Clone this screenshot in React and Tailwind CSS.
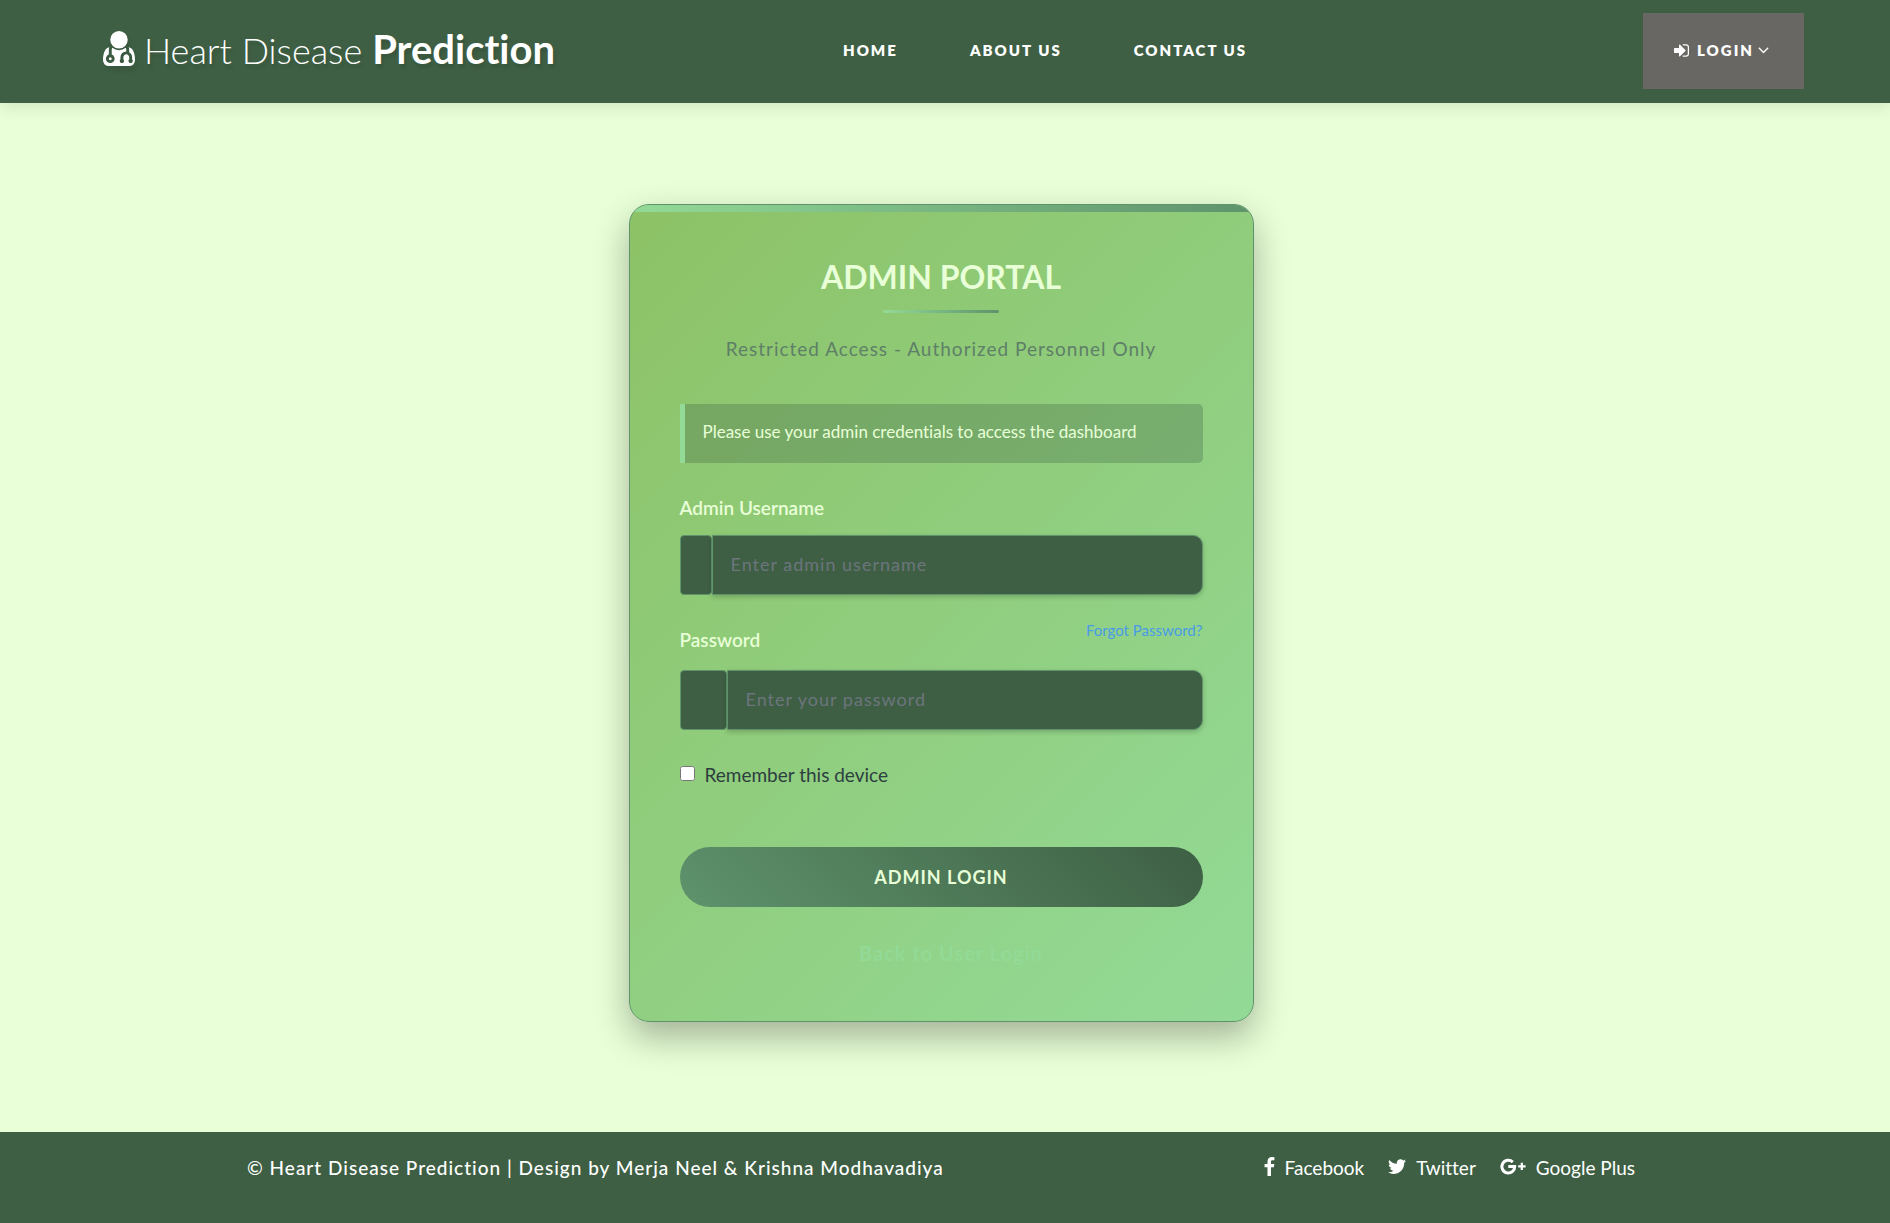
import React from "react";

const icons = {
  doctor:
    "M576 1344q0 26-19 45t-45 19-45-19-19-45 19-45 45-19 45 19 19 45zm1024 61q0 121-73 190t-194 69h-874q-121 0-194-69t-73-190q0-68 5.5-131t24-138 47.5-132.500 81-103 120-60.500q-22 52-22 120v203q-58 20-93 70t-35 111q0 80 56 136t136 56 136-56 56-136q0-61-35.500-111t-92.500-70v-203q0-62 25-93 132 104 295 104t295-104q25 31 25 93v64q-106 0-181 75t-75 181v89q-32 29-32 71 0 40 28 68t68 28 68-28 28-68q0-42-32-71v-89q0-52 38-90t90-38 90 38 38 90v89q-32 29-32 71 0 40 28 68t68 28 68-28 28-68q0-42-32-71v-89q0-68-34.500-127.500t-93.500-93.500q0-10 .5-42.500t0-48-2.500-41.500-7-47-13-40q68 15 120 60.500t81 103 47.500 132.500 24 138 5.500 131zm-320-893q0 159-112.500 271.500t-271.500 112.500-271.500-112.500-112.500-271.500 112.500-271.500 271.500-112.500 271.500 112.500 112.500 271.500z",
  signIn:
    "M1312 896q0 26-19 45l-544 544q-19 19-45 19t-45-19-19-45v-288h-448q-26 0-45-19t-19-45v-384q0-26 19-45t45-19h448v-288q0-26 19-45t45-19 45 19l544 544q19 19 19 45zm352-352v704q0 119-84.500 203.500t-203.500 84.500h-320q-13 0-22.500-9.500t-9.500-22.500q0-4-1-20t-.5-26.500 3-23.500 10-19.500 20.500-6.500h320q66 0 113-47t47-113v-704q0-66-47-113t-113-47h-312l-11.500-1-11.500-3-8-5.500-7-9-2-13.500q0-4-1-20t-.5-26.500 3-23.500 10-19.500 20.500-6.500h320q119 0 203.500 84.500t84.500 203.500z",
  angleDown:
    "M1395 736q0 13-10 23l-466 466q-10 10-23 10t-23-10l-466-466q-10-10-10-23t10-23l50-50q10-10 23-10t23 10l393 393 393-393q10-10 23-10t23 10l50 50q10 10 10 23z",
  facebook:
    "M1343 12v264h-157q-86 0-116 36t-30 108v189h293l-39 296h-254v759h-306v-759h-255v-296h255v-218q0-186 104-288.500t277-102.500q147 0 228 12z",
  twitter:
    "M1684 408q-67 98-162 167 1 14 1 42 0 130-38 259.500t-115.500 248.500-184.500 210.500-258 146-323 54.500q-271 0-496-145 35 4 78 4 225 0 401-138-105-2-188-64.500t-114-159.500q33 5 61 5 43 0 85-11-112-23-185.500-111.500t-73.500-205.500v-4q68 38 146 41-66-44-105-115t-39-154q0-88 44-163 121 149 294.500 238.500t371.500 99.500q-8-38-8-74 0-134 94.500-228.500t228.500-94.500q140 0 236 102 109-21 205-78-37 115-142 178 93-10 186-50z",
};

function Icon({ name, viewBox = "0 0 1792 1792", className }) {
  return (
    <svg viewBox={viewBox} fill="currentColor" aria-hidden="true" className={className}>
      <path d={icons[name]} />
    </svg>
  );
}

function GooglePlusIcon({ className }) {
  return (
    <svg viewBox="0 0 26 17" fill="none" stroke="currentColor" aria-hidden="true" className={className}>
      <path d="M12.800 4.100A6.400 6.400 0 1 0 14.700 8.500H8.300" strokeWidth="3" />
      <path d="M21.800 4.700v7.200M18.200 8.300h7.400" strokeWidth="2.200" />
    </svg>
  );
}

function Header() {
  return (
    <header className="flex h-[103px] items-center bg-[#3e5f44] pr-[86px] pb-[2px] pl-[103px] text-white shadow-[0_4px_15px_rgba(0,0,0,0.1)]">
      <div className="flex w-[740px] items-center">
        <a href="#home" className="flex items-center gap-[9px] text-[40px] leading-[48px] text-shadow-[2px_4px_3px_rgba(0,0,0,0.1)]">
          <Icon name="doctor" viewBox="192 128 1408 1536" className="mb-1 h-[35px] w-8 drop-shadow-[2px_4px_2px_rgba(0,0,0,0.1)]" />
          <span className="mb-[2px] flex items-baseline gap-[10px]">
            <span className="text-[36px] font-light">Heart Disease</span>
            <span className="font-bold">Prediction</span>
          </span>
        </a>
      </div>
      <nav className="flex gap-[72px] text-[15px] font-extrabold tracking-[2px]">
        <a href="#home">HOME</a>
        <a href="#about">ABOUT US</a>
        <a href="#contact">CONTACT US</a>
      </nav>
      <button type="button" className="ml-auto flex h-[76px] w-[161px] items-center justify-center bg-[#696763] pr-1 text-[15px] font-extrabold tracking-[2px]">
        <Icon name="signIn" viewBox="128 128 1536 1536" className="mr-2 size-[15px]" />
        LOGIN
        <Icon name="angleDown" viewBox="384 512 1024 896" className="ml-1 h-[9px] w-[11px]" />
      </button>
    </header>
  );
}

function Field({ id, type, placeholder, addonClass }) {
  return (
    <div className="flex h-[60px]">
      <span className={`rounded-[4px] border border-[#5e936c] bg-[#3e5f44] ${addonClass}`} />
      <input
        id={id}
        type={type}
        placeholder={placeholder}
        className="min-w-0 flex-1 rounded-r-[10px] border border-[#5e936c] bg-[#3e5f44] px-[18px] pb-[2px] text-[18px] tracking-[1px] text-[#e8ffd7] shadow-[0_2px_5px_rgba(0,0,0,0.2)] outline-none placeholder:text-[#6c757d]"
      />
    </div>
  );
}

function AdminCard() {
  return (
    <form
      onSubmit={(e) => e.preventDefault()}
      className="w-[625px] overflow-hidden rounded-[20px] border border-[#5e936c] bg-linear-[135deg,#8dc266,#93da97] shadow-[0_15px_35px_rgba(0,0,0,0.3)]"
    >
      <div className="h-[7px] bg-linear-to-r from-[#93da97] to-[#5e936c]" />
      <div className="flex flex-col px-[50px] pt-[45px] pb-14">
        <h1 className="text-center text-[32px] leading-10 font-bold text-[#e8ffd7]">ADMIN PORTAL</h1>
        <div className="mx-auto mt-[13px] h-[3px] w-[116px] rounded-sm bg-linear-to-r from-[#93da97] to-[#5e936c]" />
        <p className="mt-6 text-center text-[19px] leading-6 tracking-[1px] text-[#5e7f68]">
          Restricted Access - Authorized Personnel Only
        </p>
        <p className="mt-[43px] flex h-[59px] items-center rounded-r-[5px] border-l-[5px] border-[#93da97] bg-[#3e5f44]/30 px-[18px] pb-1 text-[17px] text-[#e8ffd7]">
          Please use your admin credentials to access the dashboard
        </p>
        <label htmlFor="username" className="mt-[33px] text-[19px] leading-6 font-semibold text-[#e8ffd7]">
          Admin Username
        </label>
        <div className="mt-[15px]">
          <Field id="username" type="text" placeholder="Enter admin username" addonClass="w-8" />
        </div>
        <div className="mt-[23px] flex items-start justify-between">
          <label htmlFor="password" className="mt-[10px] text-[19px] leading-6 font-semibold text-[#e8ffd7]">
            Password
          </label>
          <a href="#forgot" className="text-[15px] leading-6 text-[#4a9be8]">
            Forgot Password?
          </a>
        </div>
        <div className="mt-[18px]">
          <Field id="password" type="password" placeholder="Enter your password" addonClass="w-[47px]" />
        </div>
        <label className="mt-[33px] flex items-center gap-[10px] text-[19px] leading-6 text-[#2d3e40]">
          <input type="checkbox" className="mb-1 size-[15px]" />
          Remember this device
        </label>
        <button
          type="submit"
          className="mt-[60px] h-[60px] rounded-full bg-linear-[45deg,#5e936c,#3e5f44] text-[18px] font-bold tracking-[1px] text-[#e8ffd7]"
        >
          ADMIN LOGIN
        </button>
        <a href="#user-login" className="mt-[34px] ml-5 text-center text-[20px] leading-6 font-bold tracking-[1px] text-[#93da97]">
          Back to User Login
        </a>
      </div>
    </form>
  );
}

function Footer() {
  return (
    <footer className="flex flex-1 items-start justify-between bg-[#3e5f44] pt-6 pr-[255px] pb-11 pl-[247px] text-white">
      <p className="text-[19px] leading-6 font-medium tracking-[1px]">
        © Heart Disease Prediction | Design by Merja Neel &amp; Krishna Modhavadiya
      </p>
      <div className="flex gap-6 text-[19px] leading-6">
        <a href="#facebook" className="flex items-center gap-[10px]">
          <Icon name="facebook" viewBox="479 0 864 1664" className="mb-1 h-[19px] w-[11px]" />
          Facebook
        </a>
        <a href="#twitter" className="flex items-center gap-[10px]">
          <Icon name="twitter" viewBox="108 240 1576 1300" className="mb-1 h-[15px] w-[18px]" />
          Twitter
        </a>
        <a href="#google-plus" className="flex items-center gap-[10px]">
          <GooglePlusIcon className="mb-1 h-[17px] w-[26px]" />
          Google Plus
        </a>
      </div>
    </footer>
  );
}

export default function App() {
  return (
    <div className="flex min-h-screen flex-col bg-[#e8ffd7] font-[Lato,'Open_Sans',sans-serif] [font-variant-ligatures:none]">
      <Header />
      <main className="flex justify-center pt-[101px] pr-2 pb-[110px]">
        <AdminCard />
      </main>
      <Footer />
    </div>
  );
}
